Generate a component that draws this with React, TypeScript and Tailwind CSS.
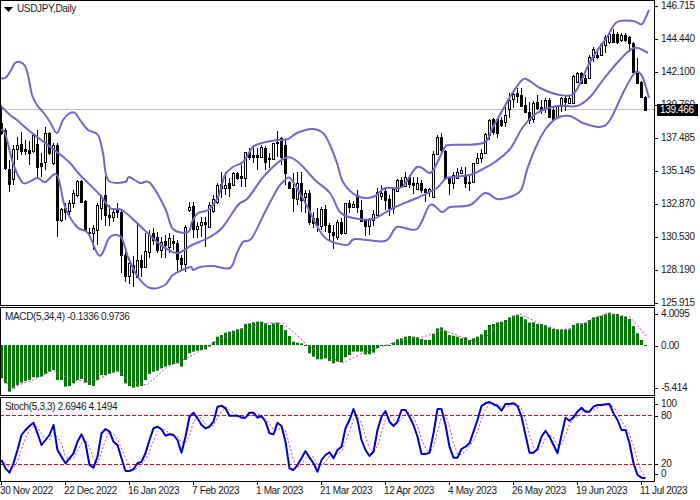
// USDJPY daily chart, traced from the reference. Bars sit every 4px.
type Candle = [number, number, number, number, number]; // high, body top, body bottom, low, filled

const candles: Candle[] = [
  [105, 123, 133, 135, 1], [128, 130, 168, 170, 1], [160, 169, 184, 192, 1], [145, 149, 179, 185, 0], [137, 145, 149, 160, 0],
  [132, 144, 151, 155, 1], [140, 149, 151, 155, 1], [141, 150, 153, 165, 1], [133, 135, 151, 153, 0], [130, 144, 167, 178, 1],
  [153, 163, 166, 177, 1], [127, 133, 162, 170, 0], [132, 133, 153, 155, 1], [143, 145, 163, 165, 0], [143, 145, 220, 237, 1],
  [208, 209, 220, 222, 0], [203, 208, 212, 220, 1], [200, 203, 211, 215, 0], [190, 193, 203, 208, 0], [180, 181, 195, 197, 0],
  [180, 181, 202, 203, 1], [200, 201, 230, 232, 1], [228, 232, 233, 236, 1], [225, 228, 233, 250, 0], [203, 205, 230, 245, 0],
  [195, 197, 208, 220, 0], [176, 195, 215, 226, 1], [205, 215, 217, 226, 1], [208, 212, 217, 222, 0], [203, 210, 212, 218, 1],
  [210, 212, 255, 273, 1], [248, 255, 276, 282, 1], [258, 263, 276, 284, 0], [256, 265, 272, 287, 1], [222, 260, 277, 278, 0],
  [255, 260, 267, 277, 1], [233, 251, 267, 268, 0], [230, 235, 252, 258, 0], [228, 233, 240, 245, 1], [232, 237, 250, 253, 1],
  [237, 242, 250, 258, 0], [235, 241, 245, 258, 1], [233, 238, 247, 253, 0], [235, 241, 243, 250, 1], [240, 243, 259, 271, 1],
  [255, 258, 264, 270, 1], [225, 227, 264, 272, 0], [202, 207, 210, 212, 0], [202, 206, 229, 238, 1], [222, 226, 229, 238, 0],
  [217, 222, 225, 237, 0], [217, 222, 224, 247, 1], [202, 205, 227, 228, 0], [195, 199, 211, 213, 0], [183, 185, 202, 204, 0],
  [172, 184, 188, 198, 1], [172, 185, 188, 195, 0], [178, 183, 188, 197, 1], [172, 173, 185, 186, 0], [172, 173, 178, 180, 1],
  [165, 176, 178, 187, 1], [152, 152, 178, 187, 0], [148, 152, 157, 160, 1], [145, 155, 157, 163, 1], [148, 155, 157, 170, 1],
  [145, 147, 157, 158, 0], [146, 148, 162, 170, 1], [153, 158, 159, 168, 1], [143, 143, 159, 160, 0], [131, 142, 143, 157, 1],
  [137, 138, 157, 165, 1], [140, 145, 173, 185, 1], [181, 182, 188, 189, 1], [173, 188, 198, 212, 1], [172, 183, 199, 205, 0],
  [172, 183, 200, 212, 1], [190, 193, 197, 213, 0], [190, 193, 222, 225, 1], [212, 218, 223, 228, 1], [208, 218, 225, 232, 1],
  [207, 209, 226, 230, 0], [205, 209, 225, 232, 1], [223, 225, 232, 240, 1], [225, 232, 235, 249, 1], [220, 222, 237, 240, 0],
  [218, 222, 233, 235, 1], [203, 203, 233, 234, 0], [200, 203, 207, 213, 1], [201, 204, 207, 208, 0], [190, 195, 207, 213, 1],
  [200, 210, 221, 222, 1], [219, 220, 226, 236, 1], [218, 219, 226, 235, 0], [210, 214, 220, 226, 0], [188, 192, 215, 216, 0],
  [185, 193, 196, 200, 0], [187, 191, 200, 210, 1], [195, 199, 208, 216, 1], [188, 189, 208, 214, 0], [179, 180, 191, 192, 0],
  [177, 180, 187, 188, 1], [172, 177, 186, 187, 0], [175, 177, 184, 188, 1], [177, 183, 185, 194, 1], [177, 183, 189, 190, 0],
  [180, 183, 190, 193, 1], [188, 189, 192, 202, 1], [188, 189, 191, 197, 0], [151, 154, 197, 197, 0], [135, 137, 154, 155, 0],
  [133, 137, 150, 152, 1], [150, 151, 178, 180, 1], [177, 178, 183, 195, 1], [172, 175, 183, 189, 0], [168, 172, 178, 179, 0],
  [167, 170, 173, 174, 0], [167, 175, 183, 188, 1], [175, 182, 183, 191, 1], [163, 163, 182, 182, 0], [153, 158, 163, 164, 0],
  [149, 153, 158, 163, 0], [133, 134, 153, 154, 0], [119, 120, 135, 140, 0], [118, 119, 132, 135, 1], [118, 119, 133, 138, 1],
  [117, 120, 125, 127, 1], [107, 115, 122, 127, 0], [93, 100, 109, 118, 0], [92, 94, 99, 108, 0], [88, 93, 96, 103, 1],
  [88, 95, 106, 107, 1], [97, 105, 112, 113, 1], [102, 112, 120, 124, 1], [101, 103, 119, 123, 0], [95, 102, 108, 110, 1],
  [100, 107, 109, 114, 1], [98, 100, 108, 113, 0], [98, 100, 117, 118, 1], [107, 110, 119, 120, 1], [105, 106, 117, 119, 0],
  [97, 98, 106, 112, 0], [96, 98, 102, 111, 1], [95, 98, 103, 103, 0], [75, 76, 103, 104, 0], [72, 73, 82, 83, 0],
  [72, 73, 83, 83, 1], [75, 78, 83, 83, 1], [55, 57, 78, 79, 0], [47, 49, 57, 62, 0], [50, 55, 57, 59, 1],
  [43, 44, 55, 56, 0], [35, 37, 45, 53, 0], [32, 34, 42, 44, 0], [29, 34, 42, 42, 1], [32, 34, 42, 44, 1],
  [33, 35, 40, 42, 0], [33, 35, 40, 42, 1], [36, 37, 43, 52, 1], [42, 43, 72, 72, 1], [58, 72, 83, 84, 1],
  [81, 82, 97, 98, 1], [96, 97, 110, 111, 1],
];

const upper =
  "0,78 5,78 10,72 15,63 20,62 25,66 28,75 32,95 37,105 43,112 50,122 57,133 63,120 70,113 75,113 80,120 88,130 98,135 103,153 108,180 125,182 129,177 140,183 150,183 165,208 173,229 188,232 192,222 198,213 208,210 218,197 225,175 233,167 243,162 253,147 262,143 278,140 288,139 297,133 312,129 323,133 330,145 337,163 343,182 357,196 373,197 385,188 402,187 417,167 430,173 437,163 445,147 450,145 483,143 493,127 510,97 522,80 528,80 540,88 560,95 575,92 590,62 607,37 617,22 633,21 640,24 643,23 649,10";
const middle =
  "0,105 10,115 17,120 32,133 57,152 70,163 80,175 100,195 110,208 122,210 137,223 157,242 165,248 178,253 192,245 208,238 222,228 238,205 248,198 265,175 285,158 298,162 315,180 330,193 340,212 353,218 373,219 393,208 417,198 437,188 447,178 470,175 483,169 495,162 510,149 523,127 537,113 557,106 577,106 590,97 603,80 617,63 630,50 638,48 648,53";
const lower =
  "0,130 5,133 13,163 23,183 37,178 45,182 57,175 65,207 77,227 88,233 97,253 102,254 110,237 121,237 128,257 138,277 150,288 165,285 173,275 190,267 193,270 200,267 213,266 230,268 237,253 243,242 252,238 265,212 278,188 285,180 290,178 298,190 308,208 318,228 328,240 347,245 355,239 385,241 397,227 417,229 430,205 442,212 450,207 470,205 485,193 497,199 510,197 521,190 527,170 535,149 545,130 557,118 570,116 583,123 600,127 610,120 623,93 633,75 638,72 643,78 649,98";

// macd and stoch values are y * 3 relative to y=300 (read off the 3x crops)
const macd = [
  235, 250, 275, 265, 255, 248, 243, 240, 232, 232, 230, 222, 215, 210, 240, 240, 260, 258, 250, 240,
  237, 248, 255, 258, 240, 225, 225, 222, 218, 215, 228, 250, 258, 263, 260, 258, 240, 222, 215, 212,
  205, 200, 195, 192, 190, 200, 180, 160, 155, 152, 150, 148, 140, 125, 110, 105, 98, 95, 92, 88,
  85, 72, 70, 67, 65, 65, 70, 75, 70, 68, 75, 90, 108, 125, 128, 130, 135, 160, 170, 178,
  178, 175, 183, 190, 185, 187, 172, 165, 155, 155, 155, 163, 163, 158, 145, 135, 135, 135, 128, 118,
  115, 110, 108, 110, 112, 117, 120, 120, 102, 85, 82, 92, 105, 107, 110, 115, 112, 120, 115, 110,
  103, 90, 75, 72, 67, 65, 60, 52, 47, 44, 50, 58, 68, 67, 72, 72, 75, 82, 87, 88,
  88, 88, 88, 75, 70, 70, 68, 60, 52, 50, 47, 43, 38, 42, 42, 48, 50, 57, 78, 100, 120, 137,
];
const macdSignal =
  "0,378 13,387 33,380 53,370 57,373 73,380 93,382 117,370 133,383 147,385 167,367 193,355 213,343 240,330 263,323 283,323 297,335 307,345 330,357 343,363 363,353 380,347 403,340 423,337 443,330 470,340 480,343 493,330 520,314 543,325 560,330 573,328 607,313 630,317 647,337";

const stoch = [
  480, 505, 518, 490, 450, 405, 390, 378, 368, 400, 435, 420, 405, 375, 450, 470, 490, 475, 460, 425,
  403, 430, 495, 503, 470, 400, 387, 395, 425, 435, 475, 513, 513, 508, 490, 485, 460, 420, 385, 380,
  388, 407, 403, 405, 420, 458, 410, 350, 338, 355, 375, 385, 380, 365, 320, 317, 325, 347, 347, 347,
  353, 353, 338, 338, 353, 348, 365, 400, 403, 368, 378, 425, 505, 510, 495, 475, 453, 473, 490, 515,
  480, 465, 457, 475, 450, 440, 385, 360, 327, 360, 420, 450, 468, 455, 390, 350, 333, 365, 378, 365,
  330, 330, 350, 375, 410, 462, 462, 458, 400, 327, 327, 375, 440, 473, 473, 447, 440, 430, 395, 360,
  318, 310, 306, 313, 318, 332, 312, 312, 310, 318, 350, 405, 458, 458, 447, 410, 392, 410, 435, 460,
  405, 353, 362, 352, 335, 323, 335, 335, 320, 315, 315, 313, 312, 340, 360, 390, 390, 430, 490, 525, 533, 535,
];

const barX = (i: number) => 1 + 4 * i;
const toY = (v: number) => 300 + v / 3;

// Catmull-Rom through the traced points, the bands are smooth curves
function smoothPath(points: string) {
  const pts = points.split(" ").map((p) => p.split(",").map(Number));
  let d = `M${pts[0][0]} ${pts[0][1]}`;
  for (let i = 0; i < pts.length - 1; i++) {
    const p0 = pts[Math.max(0, i - 1)];
    const p1 = pts[i];
    const p2 = pts[i + 1];
    const p3 = pts[Math.min(pts.length - 1, i + 2)];
    const c1x = p1[0] + (p2[0] - p0[0]) / 6;
    const c1y = p1[1] + (p2[1] - p0[1]) / 6;
    const c2x = p2[0] - (p3[0] - p1[0]) / 6;
    const c2y = p2[1] - (p3[1] - p1[1]) / 6;
    d += `C${c1x.toFixed(1)} ${c1y.toFixed(1)} ${c2x.toFixed(1)} ${c2y.toFixed(1)} ${p2[0]} ${p2[1]}`;
  }
  return d;
}

const stochLine = stoch.map((v, i) => `${barX(i) + 0.5},${toY(v).toFixed(1)}`).join(" ");
const stochSignal = stoch
  .map((_, i) => {
    const from = Math.max(0, i - 2);
    const win = stoch.slice(from, i + 1);
    const avg = win.reduce((a, b) => a + b, 0) / win.length;
    return `${barX(i) + 0.5},${toY(avg).toFixed(1)}`;
  })
  .join(" ");

const priceLabels = ["146.715", "144.440", "142.100", "139.760", "137.485", "135.145", "132.870", "130.530", "128.190", "125.915"];
const dates = ["30 Nov 2022", "22 Dec 2022", "16 Jan 2023", "7 Feb 2023", "1 Mar 2023", "21 Mar 2023", "12 Apr 2023", "4 May 2023", "26 May 2023", "19 Jun 2023", "11 Jul 2023"];

function AxisLabel({ children, className = "" }: { children: string; className?: string }) {
  return (
    <div className={`flex items-center h-[12px] ${className}`}>
      <span className="w-[3px] h-px bg-black" />
      <span className="ml-[3px]">{children}</span>
    </div>
  );
}

function PriceChart() {
  return (
    <svg width="653" height="304" viewBox="1 1 653 304" className="block">
      <line x1="0" x2="654" y1="109.5" y2="109.5" stroke="#c0c0c0" />
      {candles.map(([h, t, b, l, filled], i) => (
        <g key={i}>
          <rect x={barX(i)} y={h} width="1" height={l - h} fill="#000" />
          <rect
            x={barX(i) - 0.5}
            y={t + 0.5}
            width="2"
            height={Math.max(b - t, 1)}
            fill={filled ? "#000" : "#fff"}
            stroke="#000"
          />
        </g>
      ))}
      {[upper, middle, lower].map((points, i) => (
        <path key={i} d={smoothPath(points)} fill="none" stroke="#7266cc" strokeWidth="2" />
      ))}
    </svg>
  );
}

function MacdChart() {
  return (
    <svg width="653" height="87" viewBox="1 308 653 87" className="block">
      {macd.map((v, i) => {
        const tip = toY(v);
        const top = Math.min(tip, 345);
        return <rect key={i} x={barX(i) - 1} y={top} width="3" height={Math.max(Math.abs(tip - 345), 1)} fill="#007a00" />;
      })}
      <polyline points={macdSignal} fill="none" stroke="#c040c0" strokeWidth="1" strokeDasharray="2 2" />
    </svg>
  );
}

function StochChart() {
  return (
    <svg width="653" height="83" viewBox="1 398 653 83" className="block">
      <line x1="0" x2="654" y1="415.5" y2="415.5" stroke="#c8102a" strokeDasharray="4 2" />
      <line x1="0" x2="654" y1="464.5" y2="464.5" stroke="#c8102a" strokeDasharray="4 2" />
      <polyline points={stochSignal} fill="none" stroke="#c040c0" strokeWidth="1" strokeDasharray="2 2" />
      <polyline points={stochLine} fill="none" stroke="#0000c8" strokeWidth="2" strokeLinejoin="round" />
    </svg>
  );
}

export default function App() {
  return (
    <div className="w-[700px] h-[500px] bg-white text-[10px] leading-[12px] tracking-[-0.35px] text-[#1a1a1a] font-['Liberation_Sans',sans-serif] flex flex-col overflow-hidden">
      {/* main pane */}
      <div className="flex h-[306px] shrink-0">
        <div className="relative w-[655px] border border-black">
          <PriceChart />
          <div className="absolute left-[3px] top-[2px] flex items-center gap-[4px]">
            <svg width="9" height="5" viewBox="0 0 9 5">
              <path d="M0 0H9L4.5 5Z" fill="#000" />
            </svg>
            <span>USDJPY,Daily</span>
          </div>
        </div>
        <div className="relative flex flex-col justify-between h-[309px]">
          {priceLabels.map((p) => (
            <AxisLabel key={p}>{p}</AxisLabel>
          ))}
          {/* current price tag */}
          <div className="absolute left-[2px] top-[104px] w-[41px] h-[12px] bg-black text-white pl-[3px]">139.466</div>
        </div>
      </div>

      {/* MACD pane */}
      <div className="flex h-[89px] shrink-0 mt-px">
        <div className="relative w-[655px] border border-black">
          <MacdChart />
          <div className="absolute left-[4px] top-[3px]">MACD(5,34,4) -0.1336 0.9736</div>
        </div>
        <div className="flex flex-col pt-px">
          <AxisLabel>4.0095</AxisLabel>
          <AxisLabel className="mt-[20px]">0.00</AxisLabel>
          <AxisLabel className="mt-[30px]">-5.414</AxisLabel>
        </div>
      </div>

      {/* Stochastic pane */}
      <div className="flex h-[85px] shrink-0 mt-px">
        <div className="relative w-[655px] border border-black">
          <StochChart />
          <div className="absolute left-[4px] top-[3px]">Stoch(5,3,3) 2.6946 4.1494</div>
        </div>
        <div className="flex flex-col pt-[1px]">
          <AxisLabel>100</AxisLabel>
          <AxisLabel>80</AxisLabel>
          <AxisLabel className="mt-[36px]">20</AxisLabel>
          <AxisLabel className="-mt-[2px]">0</AxisLabel>
        </div>
      </div>

      {/* date axis */}
      <div className="flex">
        {dates.map((d) => (
          <div key={d} className="w-16 shrink-0">
            <div className="ml-px w-px h-[3px] bg-black" />
            <div className="whitespace-nowrap">{d}</div>
          </div>
        ))}
      </div>
    </div>
  );
}
